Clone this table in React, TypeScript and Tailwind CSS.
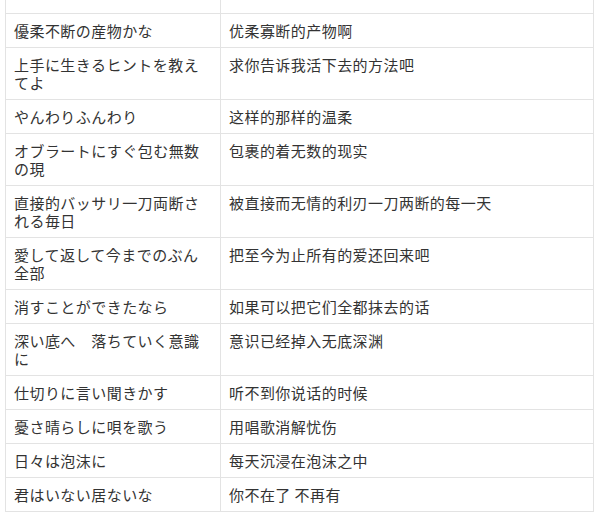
const rows: [string, string][] = [
  ['優柔不断の産物かな', '优柔寡断的产物啊'],
  ['上手に生きるヒントを教えてよ', '求你告诉我活下去的方法吧'],
  ['やんわりふんわり', '这样的那样的温柔'],
  ['オブラートにすぐ包む無数の現', '包裹的着无数的现实'],
  ['直接的バッサリ一刀両断される毎日', '被直接而无情的利刃一刀两断的每一天'],
  ['愛して返して今までのぶん全部', '把至今为止所有的爱还回来吧'],
  ['消すことができたなら', '如果可以把它们全都抹去的话'],
  ['深い底へ　落ちていく意識に', '意识已经掉入无底深渊'],
  ['仕切りに言い聞きかす', '听不到你说话的时候'],
  ['憂さ晴らしに唄を歌う', '用唱歌消解忧伤'],
  ['日々は泡沫に', '每天沉浸在泡沫之中'],
  ['君はいない居ないな', '你不在了 不再有'],
];

export default function App() {
  return (
    <div className="w-[600px] h-[513px] overflow-hidden bg-white text-[#333] font-['Noto_Sans_CJK_SC',sans-serif]">
      <table className="ml-[5px] w-[589px] border-collapse table-fixed text-[15px] leading-[18px] tracking-[0.45px]">
        <colgroup>
          <col className="w-[215px]" />
          <col />
        </colgroup>
        <tbody>
          <tr className="h-[13px]">
            <td className="border border-t-0 border-[#e3e3e3] p-0"></td>
            <td className="border border-t-0 border-[#e3e3e3] p-0"></td>
          </tr>
          {rows.map(([ja, zh]) => (
            <tr key={ja}>
              <td className="border border-[#e3e3e3] px-[8px] pt-[8px] pb-[7px] align-top font-['Noto_Sans_CJK_JP',sans-serif]">
                {ja}
              </td>
              <td className="border border-[#e3e3e3] px-[8px] pt-[8px] pb-[7px] align-top">
                {zh}
              </td>
            </tr>
          ))}
        </tbody>
      </table>
    </div>
  );
}
